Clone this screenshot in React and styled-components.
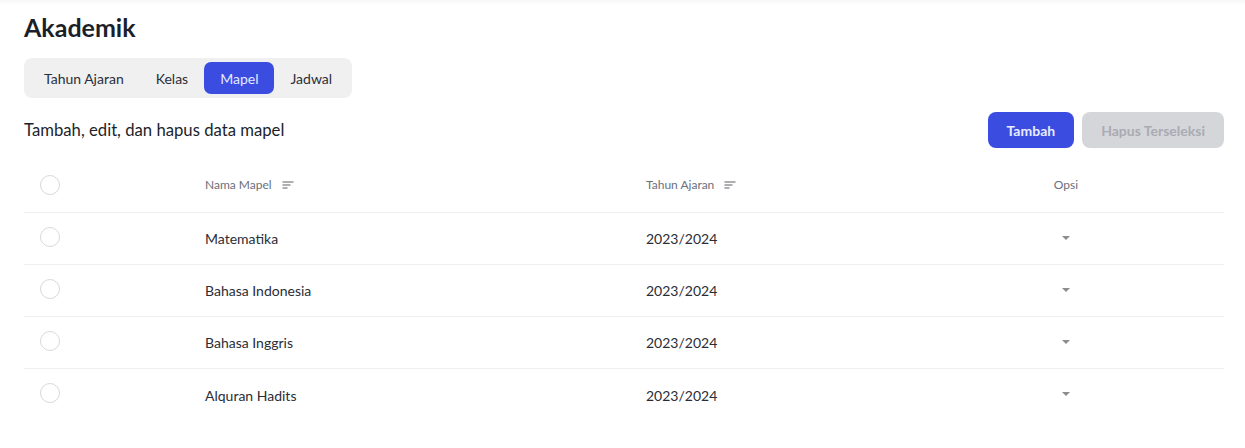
import React, { useState } from "react";
import styled, { createGlobalStyle } from "styled-components";

const Global = createGlobalStyle`
  * { box-sizing: border-box; }
  html, body { margin: 0; padding: 0; background: #fff; }
  body { font-family: Lato, "Noto Sans", Arial, sans-serif; color: #1f2330; }
`;

const Page = styled.div`
  width: 1245px;
  min-height: 448px;
  padding: 12px 21px 0 24px;
  background: linear-gradient(#f7f7f7 0, #fbfbfb 3px, #fff 5px);
`;

const Title = styled.h1`
  margin: 0;
  font-size: 25px;
  font-weight: 700;
  line-height: 30px;
  color: #1c1f2a;
`;

const Tabs = styled.div`
  display: inline-flex;
  margin-top: 16px;
  padding: 4px;
  background: #f0f0f0;
  border-radius: 8px;
`;

const Tab = styled.button`
  border: 0;
  height: 32px;
  padding: 0 16px;
  border-radius: 7px;
  font-family: inherit;
  font-size: 14px;
  cursor: pointer;
  background: ${(p) => (p.$active ? "#3a4de0" : "transparent")};
  color: ${(p) => (p.$active ? "#e6e9ff" : "#2b2e38")};
`;

const Toolbar = styled.div`
  display: flex;
  align-items: center;
  justify-content: space-between;
  margin-top: 14px;
`;

const Subtitle = styled.p`
  margin: 0;
  font-size: 16.7px;
  color: #1c1f2a;
`;

const Actions = styled.div`
  display: flex;
  gap: 8px;
`;

const Button = styled.button`
  height: 36px;
  padding: 0 19px;
  border: 0;
  border-radius: 8px;
  font-family: inherit;
  font-size: 14px;
  font-weight: 700;
  background: ${(p) => (p.$disabled ? "#d5d6da" : "#3a4de0")};
  color: ${(p) => (p.$disabled ? "#a9abb3" : "#e8ebff")};
`;

const Table = styled.div`
  margin-top: 13px;
`;

const Row = styled.div`
  display: grid;
  grid-template-columns: 165px 441px 278px 1fr;
  align-items: center;
  height: 52px;
  border-bottom: ${(p) => (p.$last ? "none" : "1px solid #efefef")};
`;

const Cell = styled.div`
  padding: 0 16px;
  font-size: 14px;
  color: #2a2d36;
  display: flex;
  align-items: center;
  justify-content: ${(p) => (p.$center ? "center" : "flex-start")};
`;

const HeadCell = styled(Cell)`
  font-size: 12px;
  font-weight: 400;
  color: #6b6f7b;
  gap: 10px;
  padding-bottom: 4px;
`;

const Radio = styled.span`
  width: 20px;
  height: 20px;
  border-radius: 50%;
  border: 1px solid #d9d9d9;
  background: #fff;
  display: inline-block;
  margin-top: -4px;
`;

const Caret = styled.span`
  width: 0;
  height: 0;
  border-left: 4px solid transparent;
  border-right: 4px solid transparent;
  border-top: 4px solid #8c8c8c;
  margin-top: -2px;
`;

const SortIcon = () => (
  <svg width="12" height="8" viewBox="0 0 12 8" fill="none">
    <path d="M0.5 1h11M0.5 4h8M0.5 7h5" stroke="#5b5e66" strokeWidth="1" />
  </svg>
);

const rows = [
  ["Matematika", "2023/2024"],
  ["Bahasa Indonesia", "2023/2024"],
  ["Bahasa Inggris", "2023/2024"],
  ["Alquran Hadits", "2023/2024"],
];

export default function App() {
  const [tab, setTab] = useState("Mapel");
  return (
    <>
      <Global />
      <Page>
        <Title>Akademik</Title>
        <Tabs>
          {["Tahun Ajaran", "Kelas", "Mapel", "Jadwal"].map((t) => (
            <Tab key={t} $active={tab === t} onClick={() => setTab(t)}>
              {t}
            </Tab>
          ))}
        </Tabs>
        <Toolbar>
          <Subtitle>Tambah, edit, dan hapus data mapel</Subtitle>
          <Actions>
            <Button>Tambah</Button>
            <Button $disabled>Hapus Terseleksi</Button>
          </Actions>
        </Toolbar>
        <Table>
          <Row>
            <Cell>
              <Radio />
            </Cell>
            <HeadCell>
              Nama Mapel <SortIcon />
            </HeadCell>
            <HeadCell>
              Tahun Ajaran <SortIcon />
            </HeadCell>
            <HeadCell $center>Opsi</HeadCell>
          </Row>
          {rows.map(([name, year], i) => (
            <Row key={name} $last={i === rows.length - 1}>
              <Cell>
                <Radio />
              </Cell>
              <Cell>{name}</Cell>
              <Cell>{year}</Cell>
              <Cell $center>
                <Caret />
              </Cell>
            </Row>
          ))}
        </Table>
      </Page>
    </>
  );
}
